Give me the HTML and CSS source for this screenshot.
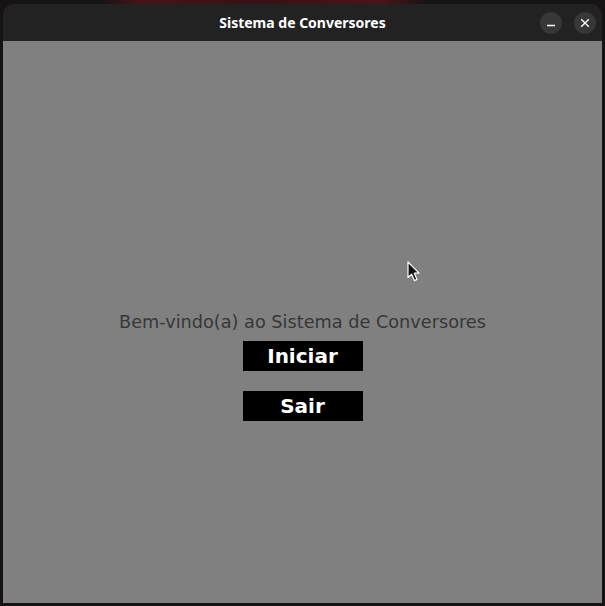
FILE: index.html
```html
<!DOCTYPE html>
<html lang="pt">
<head>
<meta charset="utf-8">
<title>Sistema de Conversores</title>
<link rel="stylesheet" href="styles.css">
</head>
<body>
<div class="desktop">
  <div class="window">
    <header class="titlebar">
      <span class="spacer"></span>
      <h1 class="title">Sistema de Conversores</h1>
      <div class="controls">
        <button class="ctl" aria-label="Minimizar">
          <svg width="10" height="10" viewBox="0 0 10 10"><path d="M1 7.5H9" stroke="#fff" stroke-width="1.4"/></svg>
        </button>
        <button class="ctl" aria-label="Fechar">
          <svg width="10" height="10" viewBox="0 0 10 10"><path d="M1.2 1.2L8.8 8.8M8.8 1.2L1.2 8.8" stroke="#fff" stroke-width="1.4"/></svg>
        </button>
      </div>
    </header>
    <main class="content">
      <p class="welcome">Bem-vindo(a) ao Sistema de Conversores</p>
      <button class="btn">Iniciar</button>
      <button class="btn">Sair</button>
    </main>
  </div>
  <svg class="cursor" width="14" height="22" viewBox="0 0 14 22">
    <path d="M1 1V16.5L4.6 13.2L7.4 19.6L10 18.4L7.3 12.2H12L1 1Z" fill="#111" stroke="#fff" stroke-width="1.2" stroke-linejoin="round"/>
  </svg>
</div>
</body>
</html>
```
FILE: styles.css
```css
html, body {
  margin: 0;
  padding: 0;
}
body {
  width: 605px;
  height: 606px;
  overflow: hidden;
  background: #151313;
}
.desktop {
  position: relative;
  width: 605px;
  height: 606px;
  box-sizing: border-box;
  padding: 4px 3px 3px 3px;
  background:
    linear-gradient(90deg, rgba(0,0,0,0) 100px, rgba(110,20,30,0.55) 140px, rgba(90,15,25,0.5) 260px, rgba(120,20,30,0.55) 380px, rgba(0,0,0,0) 430px) top / 100% 4px no-repeat,
    #151313;
}
.window {
  height: 599px;
  border-radius: 11px 11px 0 0;
  overflow: hidden;
  display: flex;
  flex-direction: column;
}
.titlebar {
  height: 37px;
  flex: none;
  background: #222222;
  display: grid;
  grid-template-columns: 1fr auto 1fr;
  align-items: center;
}
.title {
  margin: 0;
  font-family: "Noto Sans", "DejaVu Sans", sans-serif;
  font-weight: 700;
  font-size: 14px;
  color: #ffffff;
}
.controls {
  justify-self: end;
  display: flex;
  gap: 12px;
  margin-right: 6px;
}
.ctl {
  width: 22px;
  height: 22px;
  border-radius: 50%;
  border: 0;
  padding: 0;
  background: #373737;
  display: flex;
  align-items: center;
  justify-content: center;
}
.ctl svg {
  display: block;
}
.content {
  flex: 1;
  background: #808080;
  display: flex;
  flex-direction: column;
  align-items: center;
  padding-top: 271px;
}
.welcome {
  margin: 0 0 8px;
  font-family: "DejaVu Sans", sans-serif;
  font-size: 17.7px;
  line-height: 21px;
  color: #373737;
  white-space: nowrap;
}
.btn {
  width: 120px;
  height: 30px;
  margin: 0 0 20px;
  padding: 0;
  border: 0;
  background: #000000;
  color: #ffffff;
  font-family: "DejaVu Sans", sans-serif;
  font-weight: 700;
  font-size: 20px;
  line-height: 30px;
}
.cursor {
  position: absolute;
  left: 407px;
  top: 261px;
}
```
